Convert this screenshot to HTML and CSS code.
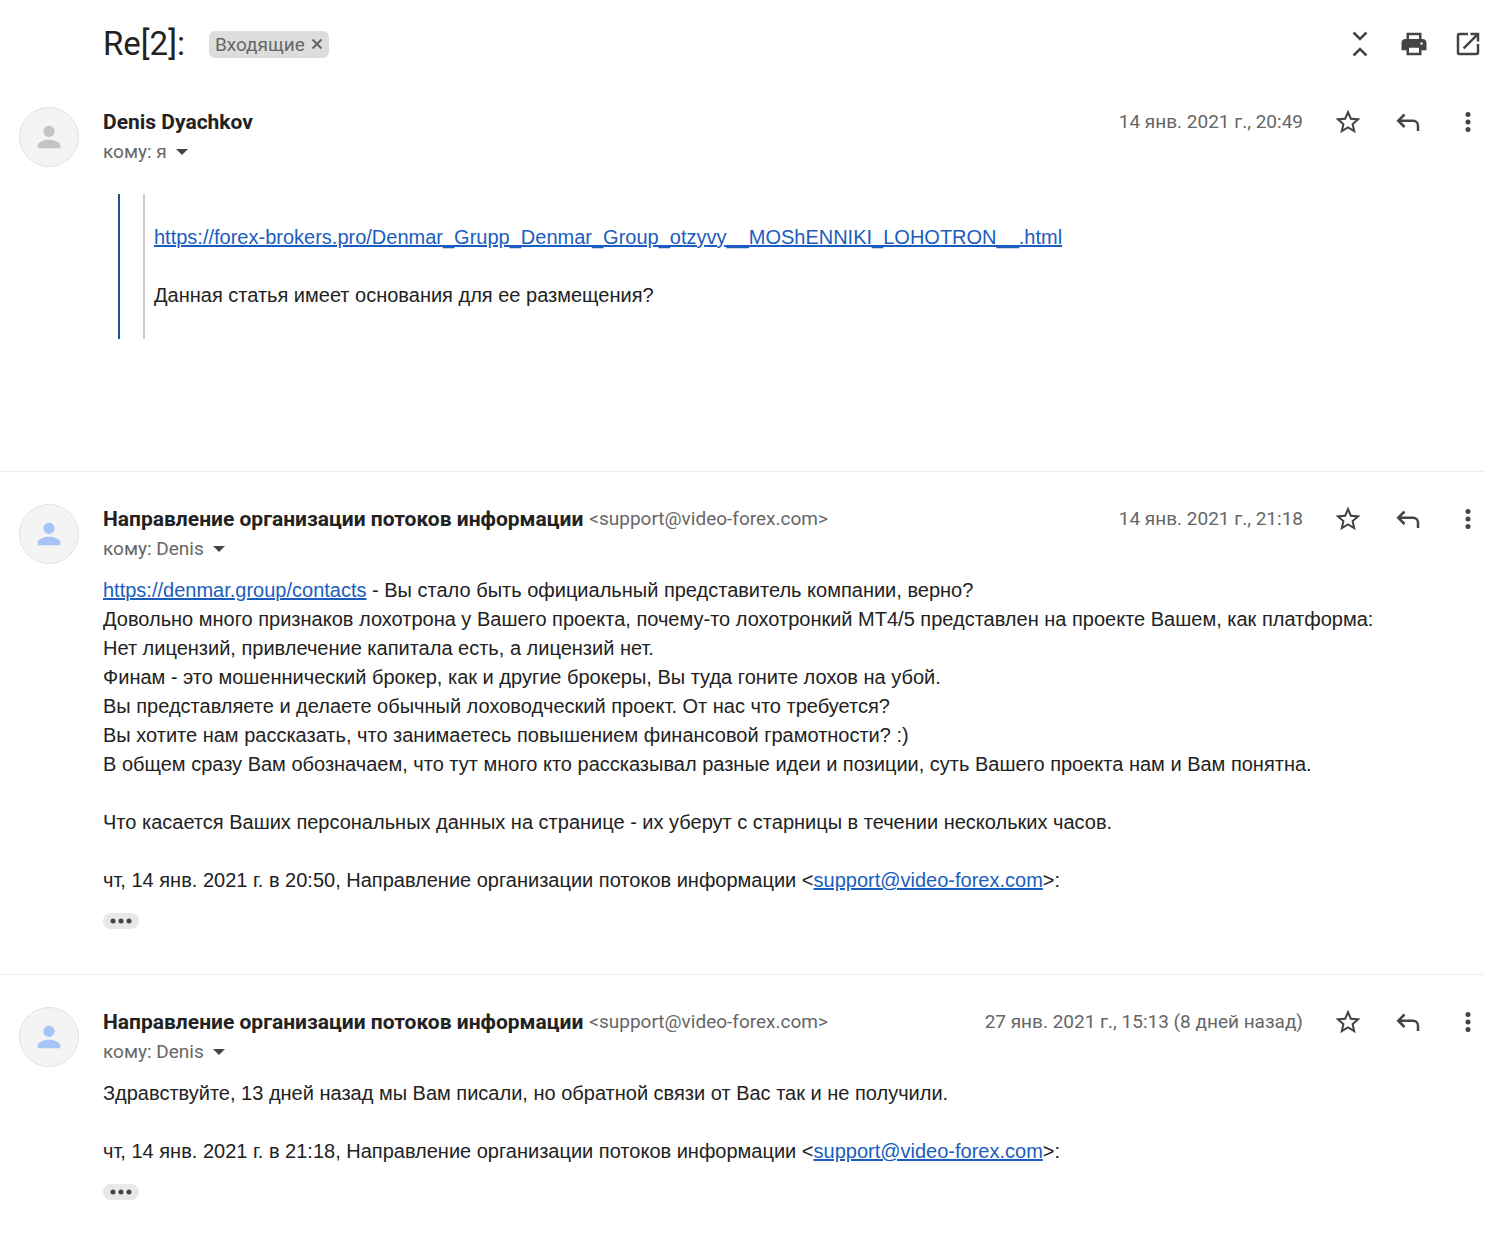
FILE: index.html
```html
<!DOCTYPE html>
<html lang="ru">
<head>
  <meta charset="UTF-8" />
  <meta name="viewport" content="width=device-width, initial-scale=1.0"/>
  <title>Re[2]:</title>
  <link rel="stylesheet" href="styles.css">
</head>
<body>
  <!-- shared icons -->
  <svg class="sprite" aria-hidden="true">
    <symbol id="i-person" viewBox="0 0 24 24"><path d="M12 12c2.2 0 4-1.8 4-4s-1.8-4-4-4-4 1.8-4 4 1.8 4 4 4zm0 2c-2.7 0-8 1.3-8 4v2h16v-2c0-2.700-5.300-4-8-4z"/></symbol>
    <symbol id="i-collapse" viewBox="0 0 24 24"><path fill="none" stroke="currentColor" stroke-width="2" d="M6.800 2.800L12 8l5.200-5.200M6.800 21.200L12 16l5.200 5.200"/></symbol>
    <symbol id="i-print" viewBox="0 0 24 24"><path fill-rule="evenodd" d="M19 8h-1V3H6v5H5c-1.660 0-3 1.340-3 3v6h4v4h12v-4h4v-6c0-1.660-1.340-3-3-3zM8 5h8v3H8V5zm8 14H8v-4h8v4zm2-6.500a1 1 0 1 1 0-2 1 1 0 0 1 0 2z"/></symbol>
    <symbol id="i-open" viewBox="0 0 24 24"><path d="M19 19H5V5h7V3H5a2 2 0 0 0-2 2v14a2 2 0 0 0 2 2h14c1.100 0 2-.9 2-2v-7h-2v7zM14 3v2h3.590l-9.830 9.830 1.410 1.410L19 6.410V10h2V3h-7z"/></symbol>
    <symbol id="i-star" viewBox="0 0 24 24"><path d="M22 9.240l-7.190-.62L12 2 9.190 8.630 2 9.240l5.460 4.730L5.820 21 12 17.270 18.180 21l-1.630-7.030L22 9.240zM12 15.400l-3.760 2.270 1-4.280-3.320-2.880 4.380-.38L12 6.100l1.710 4.040 4.380.38-3.320 2.880 1 4.280L12 15.400z"/></symbol>
    <symbol id="i-reply" viewBox="0 0 24 24"><path fill="none" stroke="currentColor" stroke-width="2" d="M9.200 6L4.200 11l5 5M4.200 11H16a4 4 0 0 1 4 4v4.200"/></symbol>
    <symbol id="i-more" viewBox="0 0 24 24"><circle cx="12" cy="6" r="2"/><circle cx="12" cy="12" r="2"/><circle cx="12" cy="18" r="2"/></symbol>
    <symbol id="i-caret" viewBox="0 0 12 6"><path d="M0 0h12L6 6z"/></symbol>
    <symbol id="i-close" viewBox="0 0 12 12"><path fill="none" stroke="currentColor" stroke-width="2" d="M1.500 1.500l9 9M10.500 1.500l-9 9"/></symbol>
    <symbol id="i-dots" viewBox="0 0 22 6"><circle cx="3" cy="3" r="2.500"/><circle cx="11" cy="3" r="2.500"/><circle cx="19" cy="3" r="2.500"/></symbol>
  </svg>

  <header class="thread-header">
    <h1>Re[2]:</h1>
    <span class="label">Входящие <button type="button" class="label-remove" aria-label="Удалить ярлык"><svg><use href="#i-close"/></svg></button></span>
    <div class="thread-actions">
      <button type="button" class="icon-btn" aria-label="Свернуть все"><svg><use href="#i-collapse"/></svg></button>
      <button type="button" class="icon-btn" aria-label="Печать"><svg><use href="#i-print"/></svg></button>
      <button type="button" class="icon-btn" aria-label="В новом окне"><svg><use href="#i-open"/></svg></button>
    </div>
  </header>

  <main>
    <article class="message">
      <div class="avatar"><svg><use href="#i-person"/></svg></div>
      <div class="content">
        <div class="message-head">
          <div class="from"><span class="name">Denis Dyachkov</span></div>
          <time class="date">14 янв. 2021 г., 20:49</time>
          <div class="actions">
            <button type="button" class="icon-btn" aria-label="Пометить"><svg><use href="#i-star"/></svg></button>
            <button type="button" class="icon-btn" aria-label="Ответить"><svg><use href="#i-reply"/></svg></button>
            <button type="button" class="icon-btn" aria-label="Ещё"><svg><use href="#i-more"/></svg></button>
          </div>
        </div>
        <div class="to">кому: я <button type="button" class="details" aria-label="Показать детали"><svg><use href="#i-caret"/></svg></button></div>
        <div class="body">
          <blockquote class="quote">
            <blockquote class="quote-inner">
              <br>
              <a href="https://forex-brokers.pro/Denmar_Grupp_Denmar_Group_otzyvy__MOShENNIKI_LOHOTRON__.html">https://forex-brokers.pro/Denmar_Grupp_Denmar_Group_otzyvy__MOShENNIKI_LOHOTRON__.html</a><br>
              <br>
              Данная статья имеет основания для ее размещения?<br>
              <br>
            </blockquote>
          </blockquote>
        </div>
      </div>
    </article>

    <article class="message">
      <div class="avatar blue"><svg><use href="#i-person"/></svg></div>
      <div class="content">
        <div class="message-head">
          <div class="from"><span class="name">Направление организации потоков информации</span> <span class="email">&lt;support@video-forex.com&gt;</span></div>
          <time class="date">14 янв. 2021 г., 21:18</time>
          <div class="actions">
            <button type="button" class="icon-btn" aria-label="Пометить"><svg><use href="#i-star"/></svg></button>
            <button type="button" class="icon-btn" aria-label="Ответить"><svg><use href="#i-reply"/></svg></button>
            <button type="button" class="icon-btn" aria-label="Ещё"><svg><use href="#i-more"/></svg></button>
          </div>
        </div>
        <div class="to">кому: Denis <button type="button" class="details" aria-label="Показать детали"><svg><use href="#i-caret"/></svg></button></div>
        <div class="body">
          <a href="https://denmar.group/contacts">https://denmar.group/contacts</a> - Вы стало быть официальный представитель компании, верно?<br>
          Довольно много признаков лохотрона у Вашего проекта, почему-то лохотронкий МТ4/5 представлен на проекте Вашем, как платформа:<br>
          Нет лицензий, привлечение капитала есть, а лицензий нет.<br>
          Финам - это мошеннический брокер, как и другие брокеры, Вы туда гоните лохов на убой.<br>
          Вы представляете и делаете обычный лоховодческий проект. От нас что требуется?<br>
          Вы хотите нам рассказать, что занимаетесь повышением финансовой грамотности? :)<br>
          В общем сразу Вам обозначаем, что тут много кто рассказывал разные идеи и позиции, суть Вашего проекта нам и Вам понятна.<br>
          <br>
          Что касается Ваших персональных данных на странице - их уберут с старницы в течении нескольких часов.<br>
          <br>
          чт, 14 янв. 2021 г. в 20:50, Направление организации потоков информации &lt;<a href="mailto:support@video-forex.com">support@video-forex.com</a>&gt;:
          <button type="button" class="trimmed" aria-label="Показать сокращённый текст"><svg><use href="#i-dots"/></svg></button>
        </div>
      </div>
    </article>

    <article class="message">
      <div class="avatar blue"><svg><use href="#i-person"/></svg></div>
      <div class="content">
        <div class="message-head">
          <div class="from"><span class="name">Направление организации потоков информации</span> <span class="email">&lt;support@video-forex.com&gt;</span></div>
          <time class="date">27 янв. 2021 г., 15:13 (8 дней назад)</time>
          <div class="actions">
            <button type="button" class="icon-btn" aria-label="Пометить"><svg><use href="#i-star"/></svg></button>
            <button type="button" class="icon-btn" aria-label="Ответить"><svg><use href="#i-reply"/></svg></button>
            <button type="button" class="icon-btn" aria-label="Ещё"><svg><use href="#i-more"/></svg></button>
          </div>
        </div>
        <div class="to">кому: Denis <button type="button" class="details" aria-label="Показать детали"><svg><use href="#i-caret"/></svg></button></div>
        <div class="body">
          Здравствуйте, 13 дней назад мы Вам писали, но обратной связи от Вас так и не получили.<br>
          <br>
          чт, 14 янв. 2021 г. в 21:18, Направление организации потоков информации &lt;<a href="mailto:support@video-forex.com">support@video-forex.com</a>&gt;:
          <button type="button" class="trimmed" aria-label="Показать сокращённый текст"><svg><use href="#i-dots"/></svg></button>
        </div>
      </div>
    </article>
  </main>
</body>
</html>
```

FILE: styles.css
```css
:root {
  --text: #222;
  --muted: #666;
  --icon: #444;
  --link: #1a5dbe;
  --line: #ececec;
  --font-ui: Roboto, sans-serif;
  --font-body: "Liberation Sans", Arial, sans-serif;
}

* {
  box-sizing: border-box;
}

body {
  margin: 0;
  padding-right: 20px;
  background: #fff;
  color: var(--text);
  font-family: var(--font-ui);
}

button {
  padding: 0;
  border: none;
  background: none;
  color: inherit;
  cursor: pointer;
}

svg {
  display: block;
  width: 100%;
  height: 100%;
  fill: currentColor;
}

.sprite {
  display: none;
}

.icon-btn {
  width: 30px;
  height: 30px;
  color: var(--icon);
}

/* Subject line */
.thread-header {
  display: flex;
  align-items: center;
  padding: 20px 1px 7px 103px;
}

h1 {
  margin: 0;
  font-size: 33px;
  font-weight: 400;
  line-height: 48px;
}

.label {
  display: flex;
  align-items: center;
  gap: 6px;
  margin-left: 24px;
  padding: 0 6px;
  border-radius: 6px;
  background: #ddd;
  color: var(--muted);
  font-size: 19px;
  line-height: 27px;
}

.label-remove {
  width: 12px;
  height: 12px;
}

.thread-actions {
  display: flex;
  gap: 24px;
  margin-left: auto;
}

/* Messages */
.message {
  display: flex;
  gap: 24px;
  padding: 32px 1px 45px 19px;
  border-bottom: 1px solid var(--line);
}

.message:last-child {
  padding-bottom: 32px;
  border-bottom: none;
}

.avatar {
  flex: none;
  width: 60px;
  height: 60px;
  padding: 12px;
  border: 1px solid #e2e2e2;
  border-radius: 50%;
  background: #f4f4f4;
  color: #c4c4c4;
}

.avatar.blue {
  color: #a6c4f5;
}

.content {
  flex: 1;
  min-width: 0;
}

.message-head {
  display: flex;
  line-height: 30px;
}

.from {
  display: flex;
  flex: 1;
  align-items: center;
  gap: 6px;
}

.name {
  font-size: 21px;
  font-weight: 700;
}

.email,
.date,
.to {
  color: var(--muted);
  font-size: 19px;
}

.actions {
  display: flex;
  gap: 30px;
  margin-left: 30px;
}

.to {
  display: flex;
  align-items: center;
  gap: 9px;
  line-height: 30px;
}

.details {
  width: 12px;
  height: 6px;
  color: var(--icon);
}

.body {
  margin-top: 12px;
  font-family: var(--font-body);
  font-size: 20px;
  line-height: 29px;
}

.body a {
  color: var(--link);
}

.quote {
  margin: 27px 0 87px 15px;
  padding-left: 23px;
  border-left: 2px solid #1b5592;
}

.quote-inner {
  margin: 0;
  padding-left: 9px;
  border-left: 2px solid #ccc;
}

.trimmed {
  display: block;
  width: 36px;
  height: 16px;
  margin-top: 18px;
  padding: 5px 7px;
  border-radius: 8px;
  background: #e8e8e8;
  color: var(--icon);
}
```
